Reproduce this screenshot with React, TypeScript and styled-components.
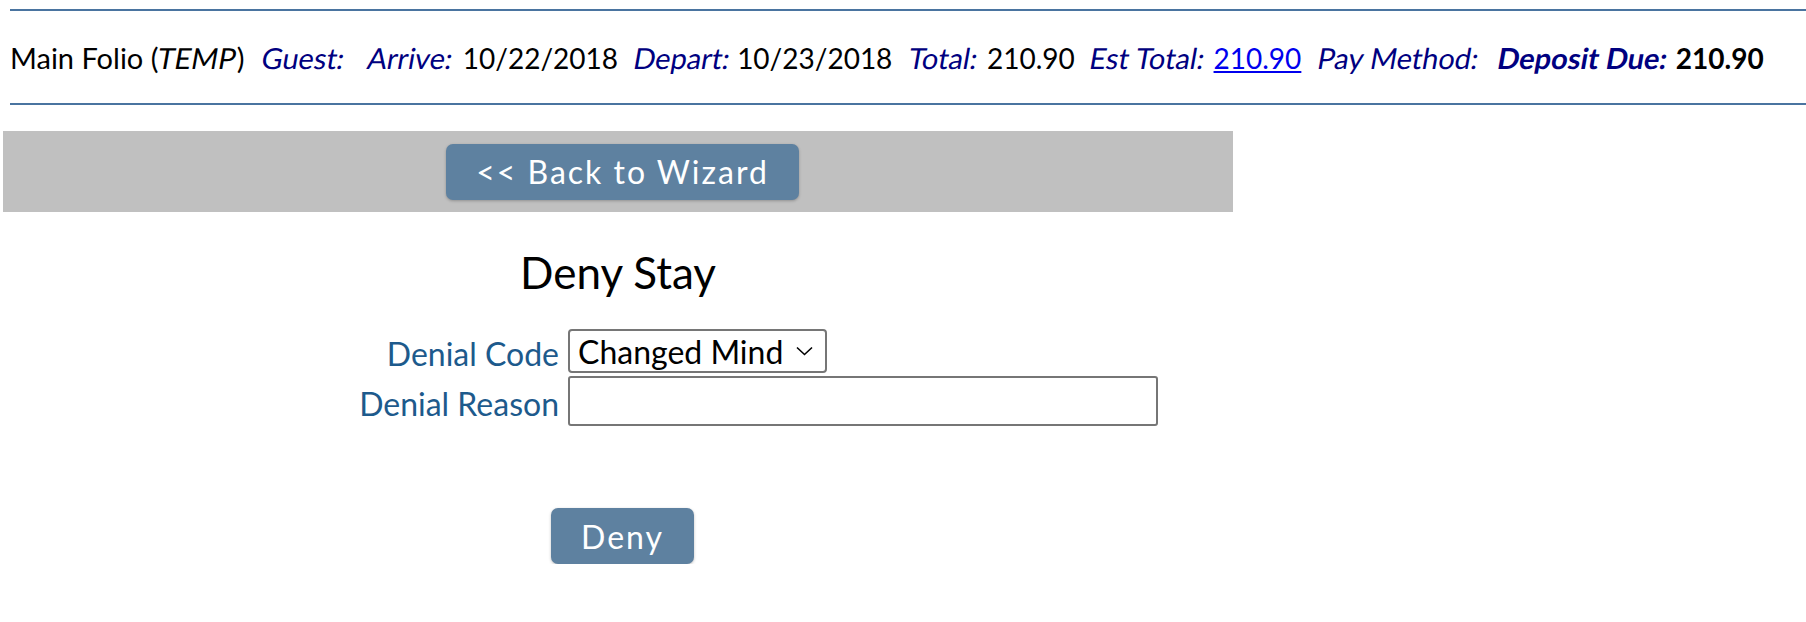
import React from 'react';
import styled, { createGlobalStyle } from 'styled-components';

const GlobalStyle = createGlobalStyle`
  body {
    margin: 0;
    background: #fff;
    font-family: Lato, "Open Sans", sans-serif;
    color: #000;
  }
`

const FolioBar = styled.div`
  margin: 9px 0 0 10px;
  height: 92px;
  border-top: 2px solid #4a74a0;
  border-bottom: 2px solid #4a74a0;
  display: flex;
  align-items: center;
  font-size: 29px;
  white-space: nowrap;
`

const Item = styled.span<{ $gap?: number }>`
  margin-left: ${({ $gap }) => $gap ?? 0}px;
`

// the page slants the regular face instead of using Lato Italic
const Slanted = styled.span`
  display: inline-block;
  transform: skewX(-10deg);
`

const Label = styled(Slanted)<{ $bold?: boolean; $space?: number }>`
  color: #000080;
  font-weight: ${({ $bold }) => ($bold ? 700 : 400)};
  margin-right: ${({ $space }) => $space ?? 6}px;
`

const Value = styled.span<{ $bold?: boolean }>`
  font-size: 28px;
  font-weight: ${({ $bold }) => ($bold ? 700 : 400)};
`

const Link = styled.a`
  font-size: 28px;
  color: #0000ee;
  text-decoration: underline;
`

const Panel = styled.div`
  margin-left: 3px;
  width: 1230px;
`

const WizardBar = styled.div`
  margin-top: 26px;
  height: 81px;
  padding-left: 9px;
  background: #c0c0c0;
  display: flex;
  align-items: center;
  justify-content: center;
`

const Button = styled.button`
  height: 56px;
  padding: 0 30px;
  border: none;
  border-radius: 7px;
  background: #5e81a0;
  color: #fff;
  font-family: Lato, sans-serif;
  font-size: 32px;
  letter-spacing: 2px;
  box-shadow: 0 1px 3px rgba(0, 0, 0, 0.25);
  cursor: pointer;
`

const Title = styled.h2`
  margin: 33px 0 0;
  text-align: center;
  font-weight: 400;
  font-size: 44px;
  line-height: 54px;
`

const Form = styled.div`
  margin: 30px 0 0 300px;
  display: grid;
  grid-template-columns: 256px auto;
  column-gap: 9px;
  row-gap: 3px;
  align-items: center;
`

const FieldLabel = styled.label`
  padding-top: 6px;
  text-align: right;
  color: #1d5a8c;
  font-size: 32px;
  line-height: 38px;
`

const Select = styled.div`
  box-sizing: border-box;
  width: 259px;
  height: 44px;
  border: 2px solid #767676;
  border-radius: 4px;
  display: flex;
  align-items: center;
  justify-content: space-between;
  padding: 0 12px 0 8px;
  font-size: 32px;
`

const TextInput = styled.input`
  box-sizing: border-box;
  width: 590px;
  height: 50px;
  border: 2px solid #767676;
  border-radius: 3px;
  font-family: Lato, sans-serif;
  font-size: 31px;
`

const Actions = styled.div`
  margin-top: 82px;
  padding-left: 9px;
  display: flex;
  justify-content: center;
`

export default function App() {
  return (
    <>
      <GlobalStyle />
      <FolioBar>
        <Item>Main Folio (<Slanted>TEMP</Slanted>)</Item>
        <Item $gap={18}><Label>Guest:</Label></Item>
        <Item $gap={17}><Label $space={10}>Arrive:</Label><Value>10/22/2018</Value></Item>
        <Item $gap={16}><Label $space={7}>Depart:</Label><Value>10/23/2018</Value></Item>
        <Item $gap={17}><Label $space={9}>Total:</Label><Value>210.90</Value></Item>
        <Item $gap={15}><Label $space={9}>Est Total:</Label><Link href="#">210.90</Link></Item>
        <Item $gap={17}><Label>Pay Method:</Label></Item>
        <Item $gap={13}><Label $bold $space={8}>Deposit Due:</Label><Value $bold>210.90</Value></Item>
      </FolioBar>
      <Panel>
        <WizardBar>
          <Button>&lt;&lt; Back to Wizard</Button>
        </WizardBar>
        <Title>Deny Stay</Title>
        <Form>
          <FieldLabel>Denial Code</FieldLabel>
          <Select>
            <span>Changed Mind</span>
            <svg width="17" height="10" viewBox="0 0 17 10">
              <path d="M1 1.5 L8.5 8.5 L16 1.5" fill="none" stroke="#000" strokeWidth="1.6" />
            </svg>
          </Select>
          <FieldLabel>Denial Reason</FieldLabel>
          <TextInput type="text" />
        </Form>
        <Actions>
          <Button>Deny</Button>
        </Actions>
      </Panel>
    </>
  );
}
